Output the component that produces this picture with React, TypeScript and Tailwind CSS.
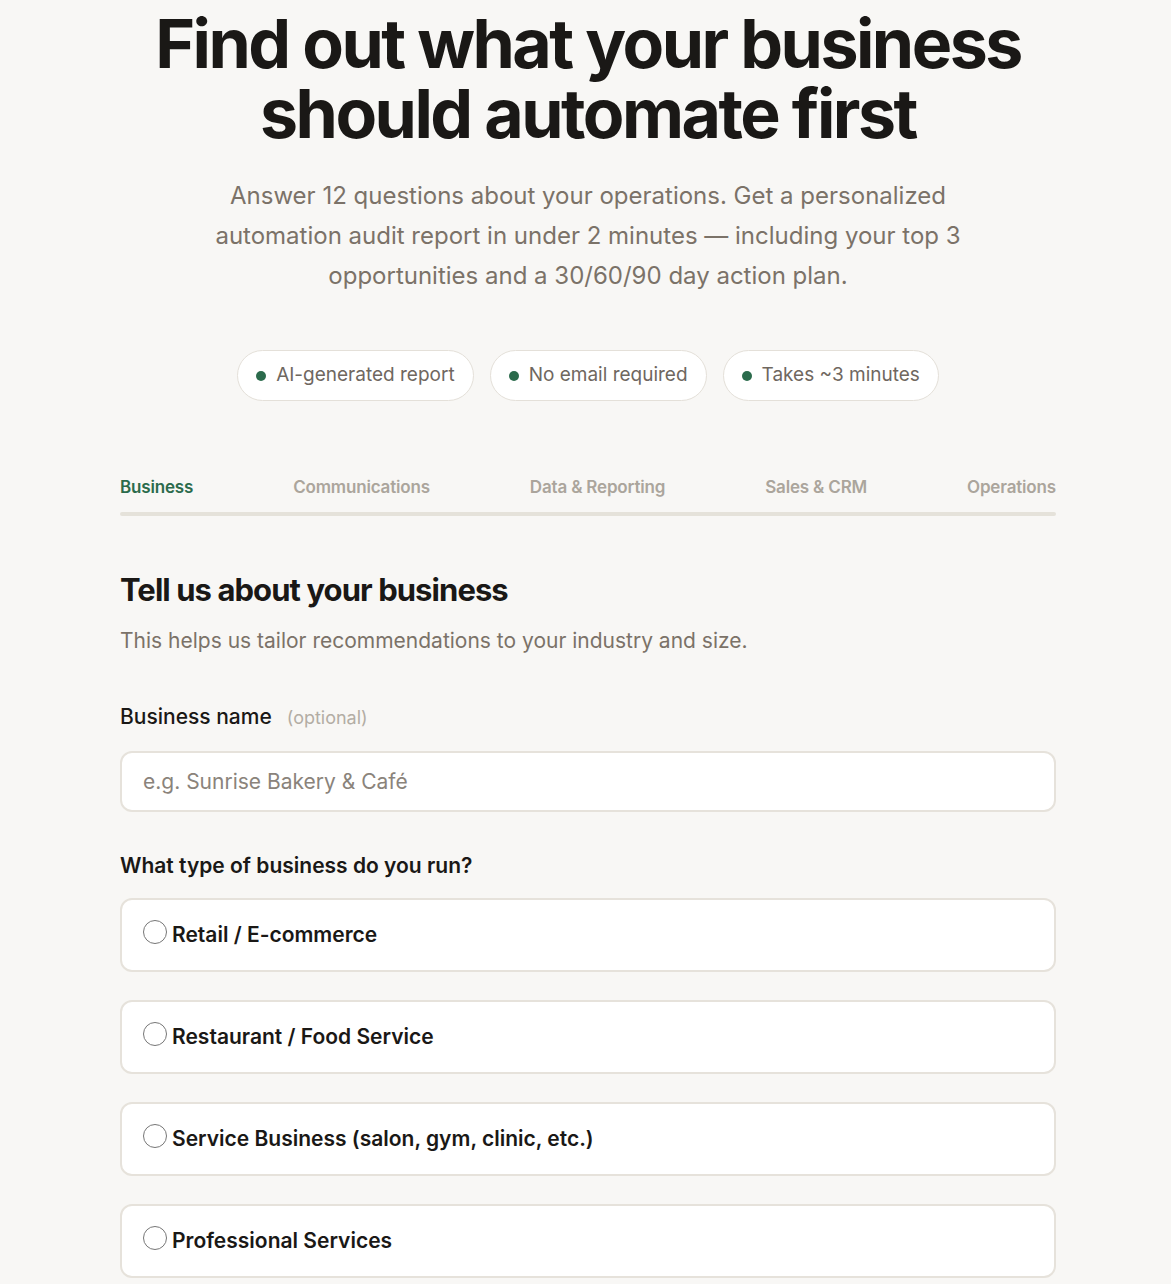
import { useState } from "react";

const pills = ["AI-generated report", "No email required", "Takes ~3 minutes"];
const tabs = ["Business", "Communications", "Data & Reporting", "Sales & CRM", "Operations"];
const businessTypes = [
  "Retail / E-commerce",
  "Restaurant / Food Service",
  "Service Business (salon, gym, clinic, etc.)",
  "Professional Services",
];

export default function App() {
  const [selected, setSelected] = useState<string | null>(null);

  return (
    <div className="min-h-screen bg-[#f8f7f5] font-['Inter',sans-serif] text-[#1c1917]">
      <div className="flex justify-center pl-[5px]">
        <div className="w-[936px] pt-[8px] pb-10">
          {/* Hero */}
          <h1 className="text-center text-[68px] font-bold leading-[70px] tracking-[-0.037em] text-[#1a1816]">
            Find out what your business
            <br />
            should automate first
          </h1>
          <p className="mx-auto mt-[28px] max-w-[760px] text-center text-[24px] leading-[40px] text-[#7b7268]">
            Answer 12 questions about your operations. Get a personalized automation audit report in under 2 minutes — including your top 3 opportunities and a 30/60/90 day action plan.
          </p>

          <div className="mt-[54px] flex justify-center gap-4">
            {pills.map((p) => (
              <div
                key={p}
                className="flex h-[51px] items-center gap-[10px] rounded-full border border-[#e4e0d9] bg-white px-[18px] text-[19px] text-[#6f675f]"
              >
                <span className="h-[10px] w-[10px] rounded-full bg-[#2b6b4c]" />
                {p}
              </div>
            ))}
          </div>

          {/* Step tabs */}
          <div className="mt-[74px]">
            <div className="flex justify-between text-[17px] font-semibold tracking-[-0.01em]">
              {tabs.map((t, i) => (
                <span key={t} className={i === 0 ? "text-[#2b6b4c]" : "text-[#aba59c]"}>
                  {t}
                </span>
              ))}
            </div>
            <div className="mt-[11px] h-[4px] rounded-full bg-[#e5e2da]" />
          </div>

          {/* Section */}
          <h2 className="mt-[54px] text-[31px] font-bold leading-[40px] tracking-[-0.03em] text-[#1a1816]">
            Tell us about your business
          </h2>
          <p className="mt-[15px] text-[21px] text-[#7b7268]">
            This helps us tailor recommendations to your industry and size.
          </p>

          <div className="mt-[45px] flex items-baseline gap-[15px]">
            <label className="text-[21px] font-medium text-[#1a1816]">Business name</label>
            <span className="text-[18px] text-[#b3ada4]">(optional)</span>
          </div>
          <input
            type="text"
            placeholder="e.g. Sunrise Bakery & Café"
            className="mt-[18px] h-[61px] w-full rounded-[12px] border-2 border-[#e6e2db] bg-white px-[21px] text-[21px] text-[#1a1816] outline-none placeholder:text-[#8a837b]"
          />

          <div className="mt-[38px] text-[21px] font-semibold text-[#1a1816]">
            What type of business do you run?
          </div>
          <div className="mt-[17px] flex flex-col gap-[28px]">
            {businessTypes.map((b) => (
              <label
                key={b}
                className="flex h-[74px] cursor-pointer items-center gap-[5px] rounded-[12px] border-2 border-[#e6e2db] bg-white px-[21px]"
              >
                <input
                  type="radio"
                  name="type"
                  checked={selected === b}
                  onChange={() => setSelected(b)}
                  className="h-[24px] w-[24px] -translate-y-[3px] accent-[#2b6b4c]"
                />
                <span className="text-[21px] font-semibold text-[#1a1816]">{b}</span>
              </label>
            ))}
          </div>
        </div>
      </div>
    </div>
  );
}
